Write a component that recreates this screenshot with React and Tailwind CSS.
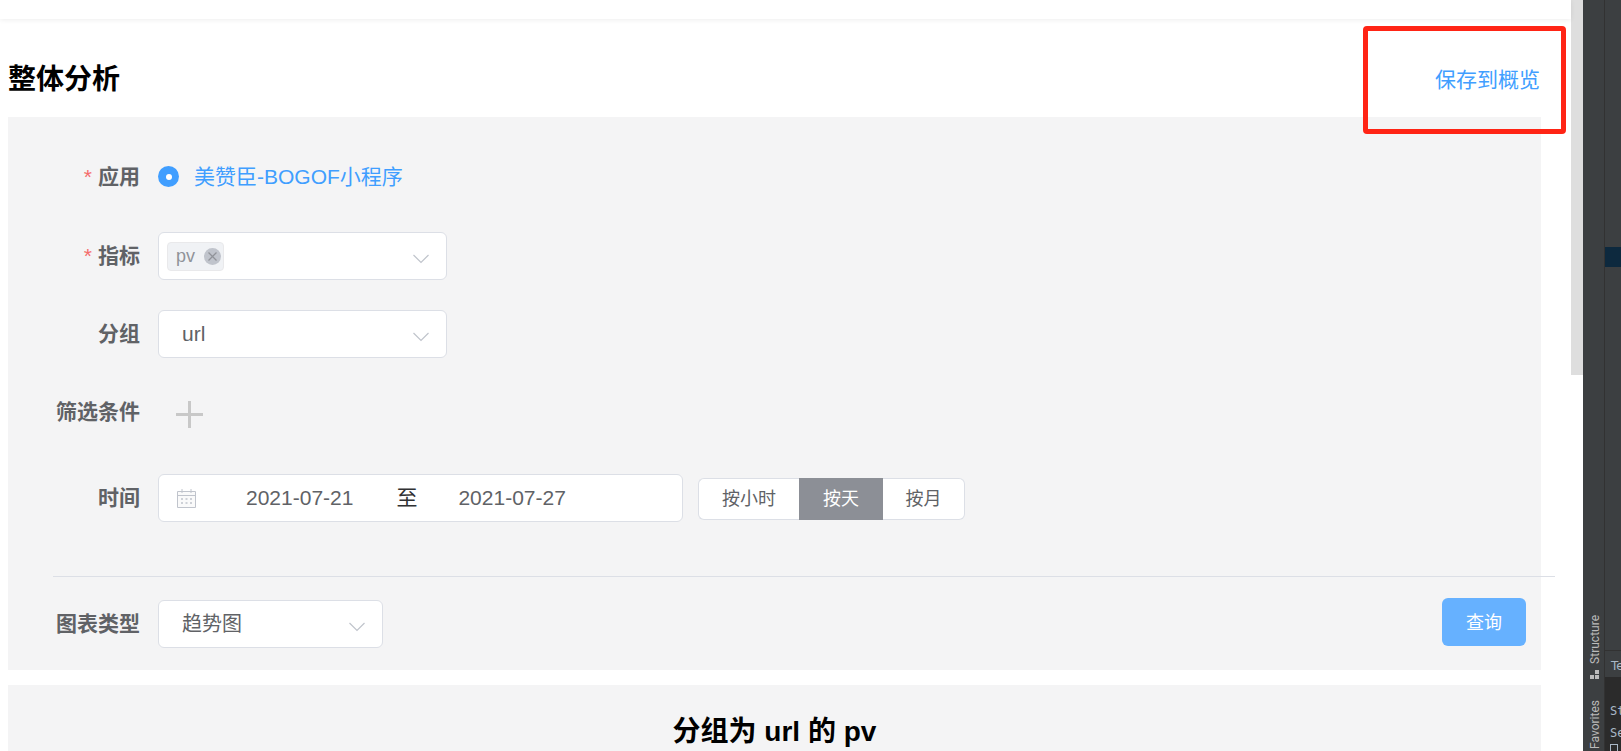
import React from 'react';

const Chevron = () => (
  <svg width="16" height="10" viewBox="0 0 16 10" fill="none" stroke="#c0c4cc" strokeWidth="1.2" className="absolute right-[17px] top-[21px]">
    <path d="M0.5 1 L8 8.5 L15.5 1" />
  </svg>
);

const Label = ({ required, children }) => (
  <div className="w-[132px] shrink-0 text-right text-[21px] font-bold leading-[47px] text-[#606266]">
    {required && <span className="mr-[6px] font-normal text-[#f56c6c]">*</span>}
    {children}
  </div>
);

const Row = ({ className = '', children }) => (
  <div className={`flex h-[47px] items-start gap-[18px] ${className}`}>{children}</div>
);

const Box = ({ className = '', children }) => (
  <div className={`relative flex h-[48px] items-center rounded-[6px] border border-[#dcdfe6] bg-white text-[21px] text-[#606266] ${className}`}>
    {children}
  </div>
);

function App() {
  return (
    <div className="flex h-screen w-full overflow-hidden bg-white font-['Liberation_Sans','Noto_Sans_CJK_SC',sans-serif]">
      <div className="relative w-[1571px] shrink-0">
        <div className="h-[19px] bg-white shadow-[0_1px_5px_rgba(0,0,0,0.07)]" />

        <div className="flex h-[98px] items-start justify-between pl-[8px] pr-[31px]">
          <h1 className="mt-[41px] text-[28px] leading-[40px] font-bold text-black">整体分析</h1>
          <a className="mt-[46px] text-[21px] leading-[30px] text-[#409eff]">保存到概览</a>
        </div>

        {/* red annotation from the screenshot */}
        <div className="absolute left-[1363px] top-[26px] h-[108px] w-[203px] rounded-[4px] border-[5px] border-[#ff2415]" />

        <div className="ml-[8px] h-[553px] w-[1533px] bg-[#f4f4f5] pt-[36px]">
          <Row>
            <Label required>应用</Label>
            <div className="flex h-[47px] items-center">
              <span className="flex h-[21px] w-[21px] items-center justify-center rounded-full bg-[#409eff]">
                <span className="h-[6px] w-[6px] rounded-full bg-white" />
              </span>
              <span className="ml-[15px] text-[21px] text-[#409eff]">美赞臣-BOGOF小程序</span>
            </div>
          </Row>

          <Row className="mt-[32px]">
            <Label required>指标</Label>
            <Box className="w-[289px] pl-[8px]">
              <span className="flex h-[29px] w-[57px] items-center rounded-[4px] border border-[#e9e9eb] bg-[#f0f2f5] pl-[8px] text-[18px] text-[#909399]">
                pv
                <span className="ml-[9px] flex h-[17px] w-[17px] items-center justify-center rounded-full bg-[#c0c4cc]">
                  <svg width="11" height="11" viewBox="0 0 11 11" stroke="#909399" strokeWidth="1.3">
                    <path d="M1.5 1.5 L9.5 9.5 M9.5 1.5 L1.5 9.5" />
                  </svg>
                </span>
              </span>
              <Chevron />
            </Box>
          </Row>

          <Row className="mt-[31px]">
            <Label>分组</Label>
            <Box className="w-[289px] pl-[23px]">
              url
              <Chevron />
            </Box>
          </Row>

          <Row className="mt-[31px]">
            <Label>筛选条件</Label>
            <svg width="27" height="27" viewBox="0 0 27 27" stroke="#c8c8c8" strokeWidth="3" className="ml-[18px] mt-[13px]">
              <path d="M0 13.5 H27 M13.5 0 V27" />
            </svg>
          </Row>

          <Row className="mt-[39px]">
            <Label>时间</Label>
            <Box className="w-[525px]">
              <svg width="19" height="20" viewBox="0 0 19 20" fill="none" stroke="#c0c4cc" strokeWidth="1" className="ml-[18px]">
                <path d="M0.5 3.5 H18.5 V19.5 H0.5 Z" fill="#fafafa" />
                <path d="M0.5 7.5 H18.5" />
                <path d="M5 1 V5 M14 1 V5" />
                <path d="M4 11 H6 M8.5 11 H10.5 M13 11 H15 M4 15 H6 M8.5 15 H10.5 M13 15 H15" strokeWidth="1.4" />
              </svg>
              <span className="ml-[50px]">2021-07-21</span>
              <span className="ml-[43px] text-[#303133]">至</span>
              <span className="ml-[41px]">2021-07-27</span>
            </Box>
            <div className="-ml-[3px] mt-[4px] flex h-[42px] text-[18px] text-[#606266]">
              <span className="flex w-[101px] items-center justify-center rounded-l-[6px] border border-r-0 border-[#dcdfe6] bg-white">按小时</span>
              <span className="flex w-[84px] items-center justify-center bg-[#8c8f96] text-white">按天</span>
              <span className="flex w-[82px] items-center justify-center rounded-r-[6px] border border-l-0 border-[#dcdfe6] bg-white">按月</span>
            </div>
          </Row>

          <div className="ml-[45px] mt-[55px] h-px w-[1502px] bg-[#dcdfe6]" />

          <Row className="mt-[23px] justify-between pr-[15px]">
            <div className="flex items-start gap-[18px]">
              <Label>图表类型</Label>
              <Box className="w-[225px] pl-[23px]">
                <span className="text-[20px]">趋势图</span>
                <Chevron />
              </Box>
            </div>
            <button className="-mt-[2px] h-[48px] w-[84px] rounded-[6px] bg-[#66b1ff] pt-[2px] text-[18px] text-white">查询</button>
          </Row>
        </div>

        <div className="ml-[8px] mt-[15px] h-[200px] w-[1533px] bg-[#f4f4f5] pt-[28px] text-center text-[28px] leading-[38px] font-bold text-black">
          分组为 url 的 pv
        </div>
      </div>

      {/* page scrollbar */}
      <div className="w-[12px] shrink-0">
        <div className="h-[375px] bg-[#dedede]" />
      </div>

      {/* IDE window behind the browser */}
      <div className="flex flex-1 bg-[#3c3f41] font-['DejaVu_Sans',sans-serif] text-[#a9b7c6]">
        <div className="flex w-[22px] shrink-0 flex-col items-center justify-end border-r border-[#323232] pl-[2px] font-['Roboto',sans-serif] text-[12px] leading-[14px] text-[#bbbbbb]">
          <span className="rotate-180 [writing-mode:vertical-rl]">Structure</span>
          <svg width="9" height="9" viewBox="0 0 9 9" fill="#bbbbbb" className="mt-[6px]">
            <rect x="5" y="0" width="4" height="4" />
            <rect x="0" y="5" width="4" height="4" />
            <rect x="5" y="5" width="4" height="4" />
          </svg>
          <span className="mb-[2px] mt-[21px] rotate-180 [writing-mode:vertical-rl]">Favorites</span>
        </div>
        <div className="flex flex-1 flex-col overflow-hidden">
          <div className="mt-[247px] h-[20px] bg-[#0d293e]" />
          <div className="flex-1" />
          <div className="h-[27px] border-t border-[#323232] pl-[6px] text-[12px] leading-[30px]">Te</div>
          <div className="h-[74px] bg-[#2b2b2b] pl-[5px] pt-[23px] font-['DejaVu_Sans_Mono',monospace] text-[12px] leading-[22px]">
            <div>St</div>
            <div>Se</div>
            <div className="h-[8px] w-[8px] border border-[#a9b7c6]" />
          </div>
        </div>
      </div>
    </div>
  );
}

export default App;
